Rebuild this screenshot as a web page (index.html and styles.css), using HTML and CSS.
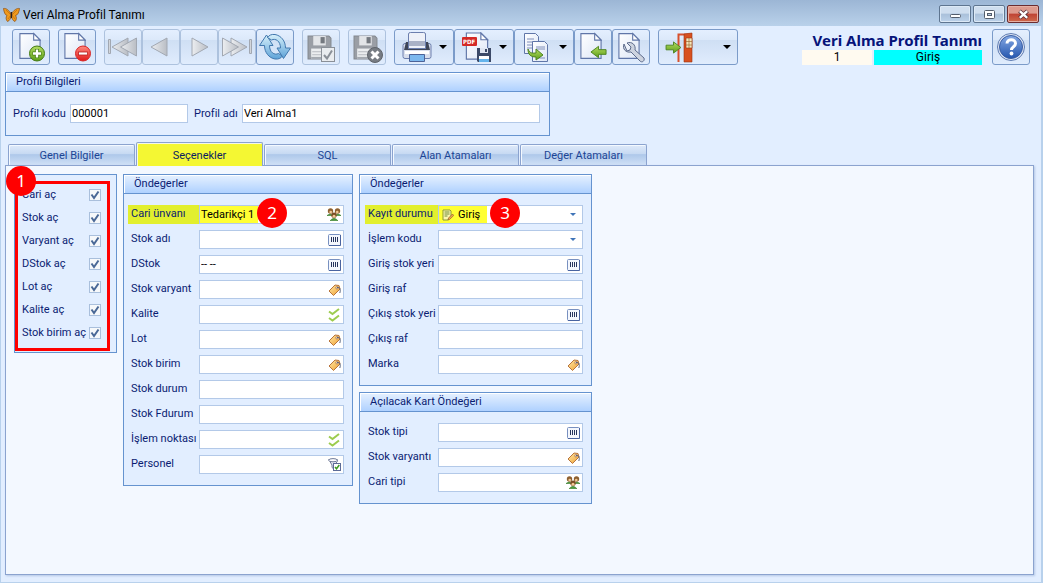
FILE: index.html
```
<!DOCTYPE html>
<html lang="tr">
<head>
<meta charset="utf-8">
<title>Veri Alma Profil Tanımı</title>
<link rel="stylesheet" href="styles.css">
</head>
<body>
<svg class="defs" aria-hidden="true">
  <defs>
    <linearGradient id="gPaper" x1="0" y1="0" x2="1" y2="1"><stop offset="0" stop-color="#fff"/><stop offset="1" stop-color="#dde6f6"/></linearGradient>
    <linearGradient id="gGreen" x1="0" y1="0" x2="0" y2="1"><stop offset="0" stop-color="#b4dc62"/><stop offset="1" stop-color="#5c9e18"/></linearGradient>
    <linearGradient id="gRed" x1="0" y1="0" x2="0" y2="1"><stop offset="0" stop-color="#ff8a80"/><stop offset="1" stop-color="#e01818"/></linearGradient>
    <linearGradient id="gGray" x1="0" y1="0" x2="1" y2="0"><stop offset="0" stop-color="#eceef1"/><stop offset="1" stop-color="#b9bdc4"/></linearGradient>
    <linearGradient id="gBlue" x1="0" y1="0" x2="0" y2="1"><stop offset="0" stop-color="#d6f0fa"/><stop offset="1" stop-color="#5fa3d8"/></linearGradient>
    <linearGradient id="gHelp" x1="0" y1="0" x2="0" y2="1"><stop offset="0" stop-color="#86a9e4"/><stop offset="1" stop-color="#2556ae"/></linearGradient>
    <linearGradient id="gTag" x1="0" y1="0" x2="1" y2="1"><stop offset="0" stop-color="#ffe9a8"/><stop offset="1" stop-color="#f0a030"/></linearGradient>
    <symbol id="page" viewBox="0 0 24 30"><path d="M1 1h15l7 7v20H1z" fill="url(#gPaper)" stroke="#6076a8" stroke-width="1.2"/><path d="M16 1v7h7z" fill="#fff" stroke="#6076a8" stroke-width="1.2"/></symbol>
    <symbol id="arrowL" viewBox="0 0 18 14"><path d="M1 7l8-6v3.500h8v5H9V13z" fill="url(#gGreen)" stroke="#4c8420" stroke-width="1"/></symbol>
    <symbol id="disk" viewBox="0 0 24 24"><path d="M1 1h20l2 2v20H1z" fill="#9a9ea5" stroke="#83888f"/><path d="M6 1h12v9H6z" fill="#e3e5e8"/><path d="M13 2h4v6h-4z" fill="#747980"/><path d="M4 13h16v10H4z" fill="#eceef0"/><path d="M5 16h14M5 19h14" stroke="#b7bbc0"/><path d="M4 21h16v2H4z" fill="#a4a9b0"/></symbol>
    <symbol id="barcode" viewBox="0 0 13 12"><rect x=".5" y=".5" width="12" height="11" rx="1" fill="#f4f7fd" stroke="#7890c0"/><path d="M12.500 1v10.500H1" fill="none" stroke="#4a64a0"/><path d="M3.500 3v5M5.500 3v5M7.500 3v5M9.500 3v5" stroke="#26345c"/></symbol>
    <symbol id="tag" viewBox="0 0 13 12"><path d="M1 7l6-6 4 .500L12 5l-6.500 6.500z" fill="url(#gTag)" stroke="#b8743c" stroke-linejoin="round"/><circle cx="9" cy="3.800" r="1.200" fill="#fff" stroke="#9a5c30" stroke-width=".7"/><path d="M9 3.500c3-.5 4 2 2.800 5.500" fill="none" stroke="#59637c"/></symbol>
    <symbol id="ticks" viewBox="0 0 13 14"><path d="M1 3.500l3.500 2.500L11 1M1 10l3.500 2.500L11 7.500" fill="none" stroke="#9ccc4e" stroke-width="2"/></symbol>
    <symbol id="people" viewBox="0 0 14 13"><path d="M0 7.500q3-3 6 0zM8 7.500q3-3 6 0z" fill="#4c9a3c" stroke="#357a2c" stroke-width=".6"/><circle cx="3.500" cy="3" r="2.700" fill="#8e6030"/><circle cx="10.500" cy="3" r="2.700" fill="#8e6030"/><circle cx="3.700" cy="4" r="1.300" fill="#f3c996"/><circle cx="10.300" cy="4" r="1.300" fill="#f3c996"/><path d="M3 12.800q4-5 8 0z" fill="#4c9a3c" stroke="#357a2c" stroke-width=".6"/><circle cx="7" cy="7.200" r="2.700" fill="#7a4d24"/><circle cx="7" cy="8.200" r="1.500" fill="#f3c996"/></symbol>
    <symbol id="person" viewBox="0 0 13 13"><path d="M.700 1.500h8.600v2L6.500 7v4.500L4 9.500V7z" fill="#e5e9f2" stroke="#6f7a98"/><ellipse cx="5" cy="2.200" rx="4.300" ry="1.600" fill="#fff" stroke="#6f7a98"/><rect x="5.500" y="5.500" width="7" height="7" fill="#fff" stroke="#5d6c98"/><path d="M7 9l1.500 1.700L11.300 7" fill="none" stroke="#3c9a20" stroke-width="1.500"/></symbol>
  </defs>
</svg>
<div class="window">
  <header class="titlebar">
    <svg class="logo" width="17" height="16" viewBox="0 0 17 16"><path d="M8 7C6 3 3 1 .500 1.500 1 5 2 8 4 8.500 2.500 10 3 13 4.500 14.500 6.500 14 8 11 8.200 9 8.500 11 10 14 12 14.500c1.500-1.500 2-4 .500-6C15 8 16 5 16.500 1.500 14 1 10.500 3 8.500 7z" fill="#f09a1c" stroke="#8a4a10" stroke-width=".7"/><path d="M3 3l5 5M14 3L9 8M5 12l3-4M12 12L9 8" stroke="#b5650c" stroke-width=".6"/><path d="M8.400 5v6" stroke="#2a2020" stroke-width="1.400"/></svg>
    <h1 class="caption">Veri Alma Profil Tanımı</h1>
    <button class="win-btn" aria-label="Küçült"><svg width="13" height="11" viewBox="0 0 13 11"><rect x="1.500" y="5.500" width="10" height="3" rx="1" fill="#fff" stroke="#535d6c"/></svg></button>
    <button class="win-btn" aria-label="Büyüt"><svg width="13" height="11" viewBox="0 0 13 11"><rect x="1.500" y="1.500" width="10" height="8" rx="1" fill="#fff" stroke="#535d6c"/><rect x="4.500" y="4.500" width="4" height="2" fill="#b8cbe0" stroke="#535d6c"/></svg></button>
    <button class="win-btn close" aria-label="Kapat"><svg width="13" height="11" viewBox="0 0 13 11"><path d="M2.500 2l8 7M10.500 2l-8 7" stroke="#5a3038" stroke-width="4"/><path d="M2.800 2.200l7.400 6.600M10.200 2.200L2.800 8.800" stroke="#fff" stroke-width="2.400"/></svg></button>
  </header>

  <main class="client">
    <div class="toolbar">
      <div class="tools">
        <div class="group"><button class="tool" aria-label="Yeni"><svg width="32" height="32"><use href="#page" x="4" y="1" width="22" height="29"/><circle cx="22" cy="22.500" r="7.500" fill="url(#gGreen)" stroke="#447a14"/><path d="M22 18v9M17.500 22.500h9" stroke="#447a14" stroke-width="4"/><path d="M22 18.500v8M18 22.500h8" stroke="#fff" stroke-width="2.400"/></svg></button></div>
        <div class="group"><button class="tool" aria-label="Sil"><svg width="32" height="32"><use href="#page" x="3" y="1" width="22" height="29"/><circle cx="22" cy="22.500" r="7.500" fill="url(#gRed)" stroke="#d82828"/><rect x="17.500" y="21" width="9" height="3" fill="#fff" stroke="#b82020" stroke-width=".8"/></svg></button></div>
        <div class="group">
          <button class="tool off" disabled aria-label="İlk"><svg width="32" height="32"><g fill="url(#gGray)" stroke="#a2a8b2"><path d="M1.500 8.500h2v14h-2z"/><path d="M21 7v18L5 16z"/><path d="M29.500 7v18l-16-9z"/></g></svg></button>
          <button class="tool off" disabled aria-label="Önceki"><svg width="32" height="32"><path d="M22 7v18L6 16z" fill="url(#gGray)" stroke="#a2a8b2"/></svg></button>
          <button class="tool off" disabled aria-label="Sonraki"><svg width="32" height="32"><path d="M9 7v18l16-9z" fill="url(#gGray)" stroke="#a2a8b2"/></svg></button>
          <button class="tool off" disabled aria-label="Son"><svg width="32" height="32"><g fill="url(#gGray)" stroke="#a2a8b2"><path d="M28.500 8.500h2v14h-2z"/><path d="M10 7v18l16-9z"/><path d="M1.500 7v18l16-9z"/></g></svg></button>
          <button class="tool" aria-label="Yenile"><svg width="32" height="32"><g fill="url(#gBlue)" stroke="#4278ae" stroke-linejoin="round"><path d="M5.500 14.500c0 7 4.500 12.500 10.500 13.500 4 .5 6-1 7.500-3l-4-2.500c-4 2-9-1-9-8h3.500L7.500 4 .500 14.500z"/><path d="M26.500 17c0-7-4.500-12.500-10.500-13.500-4-.5-6 1-7.500 3l4 2.500c4-2 9 1 9 8H18l6.500 10.500L31.500 17z"/></g></svg></button>
        </div>
        <div class="group"><button class="tool off" disabled aria-label="Kaydet"><svg width="32" height="32"><use href="#disk" x="2" y="3" width="25" height="27"/><rect x="16.500" y="16.500" width="13" height="14" fill="#e9ecef" stroke="#8a9098"/><path d="M19 24l3 3.500 5-8" fill="none" stroke="#8a9098" stroke-width="2"/></svg></button></div>
        <div class="group"><button class="tool off" disabled aria-label="Kaydı iptal et"><svg width="32" height="32"><use href="#disk" x="2" y="3" width="25" height="27"/><circle cx="24" cy="24" r="7.500" fill="#777c83" stroke="#5f646b"/><path d="M20.500 20.500l7 7M27.500 20.500l-7 7" stroke="#fff" stroke-width="3"/></svg></button></div>
        <div class="group">
          <button class="tool drop" aria-label="Yazdır"><svg width="32" height="32"><rect x="2" y="12.500" width="28" height="15" rx="2" fill="#d8deec" stroke="#6c7fae"/><path d="M5 11h22l2 8H3z" fill="#3e4556"/><path d="M7.500 17.500V3q0-1.500 2-1.500h13q2 0 2 1.500v14.500z" fill="#eef1f8" stroke="#6c7fae"/><path d="M8 10h16v5H8z" fill="#aab2c6"/><path d="M4 20h24v3H4z" fill="#fff"/><path d="M8.500 23.500h15v7h-15z" fill="#7cb8ee" stroke="#4d6398"/></svg></button>
          <button class="tool drop" aria-label="PDF kaydet"><svg width="32" height="32"><use href="#page" x="4" y="1" width="24" height="29"/><rect x="1" y="6" width="15" height="9" rx="1" fill="#d42a26"/><text x="2" y="13" class="pdf">PDF</text><path d="M16 17h14v14H17l-1-1z" fill="#3c4a68"/><path d="M19 17h8v5h-8z" fill="#dfe6f2"/><path d="M24 18h2v3h-2z" fill="#3c4a68"/><path d="M18 25h10v6H18z" fill="#fff"/><path d="M18 28h10v3H18z" fill="#64b4ec"/></svg></button>
          <button class="tool drop" aria-label="Kopyala"><svg width="32" height="32"><path d="M3.500 2.500h11l3 3v17h-14z" fill="url(#gPaper)" stroke="#6076a8"/><path d="M6 8h7M6 11h7M6 14h6M6 17h6" stroke="#8090ba"/><path d="M11.500 10.500h12l3 3v17h-15z" fill="url(#gPaper)" stroke="#6076a8"/><path d="M15 16h9M15 18h9M15 27h9" stroke="#8090ba"/><path d="M7 18c2 5 5 4 8 4v-4l7 6-7 5v-3c-5 0-8-2-8-8z" fill="url(#gGreen)" stroke="#4c8420"/></svg></button>
          <button class="tool" aria-label="İçe al"><svg width="32" height="32"><use href="#page" x="3" y="1" width="22" height="29"/><use href="#arrowL" x="13" y="14" width="17" height="14"/></svg></button>
          <button class="tool" aria-label="Ayarlar"><svg width="32" height="32"><use href="#page" x="3" y="1" width="22" height="29"/><path d="M9 13c-2 5 2 9 7 8l9 9c2 2 5 0 4-3l-9-8c1-5-3-9-8-7l4 4-1 3-3 1z" fill="#cdd3df" stroke="#5e6c8c" stroke-linejoin="round"/></svg></button>
        </div>
        <div class="group"><button class="tool exit" aria-label="Çıkış"><svg width="34" height="32"><path d="M15.500 31V3.500H29" fill="none" stroke="#d8502c" stroke-width="2"/><path d="M21 3l8-1v29h-8z" fill="#d8501f" stroke="#9c3210" stroke-width=".6"/><path d="M23 7h6v10h-6z" fill="#f3e6bc" stroke="#9c3210" stroke-width=".6"/><path d="M26 7v10M23 10.500h6M23 14h6" stroke="#9c6a30" stroke-width=".7"/><use href="#arrowL" x="-19" y="10" width="17" height="13" transform="scale(-1 1)"/></svg></button></div>
      </div>
      <div class="status">
        <h2 class="heading">Veri Alma Profil Tanımı</h2>
        <div class="badges"><span class="count">1</span><span class="mode">Giriş</span></div>
      </div>
      <button class="tool" aria-label="Yardım"><svg width="32" height="32"><circle cx="16" cy="16" r="13.500" fill="#dfe6f4" stroke="#5f7cb2"/><circle cx="16" cy="16" r="11.500" fill="url(#gHelp)" stroke="#3a5ea4"/><path d="M12 12.500c0-5 8.500-5 8.500 0 0 3.500-4 3-4 6.500" fill="none" stroke="#fff" stroke-width="3"/><circle cx="16.500" cy="22.500" r="1.900" fill="#fff"/></svg></button>
    </div>

    <section class="box profile">
      <h3 class="box-head">Profil Bilgileri</h3>
      <div class="profile-row">
        <label class="code-label" for="kod">Profil kodu</label><input class="field code" id="kod" value="000001">
        <label class="name-label" for="ad">Profil adı</label><input class="field name" id="ad" value="Veri Alma1">
      </div>
    </section>

    <nav class="tabs" role="tablist">
      <button class="tab" role="tab">Genel Bilgiler</button>
      <button class="tab active" role="tab" aria-selected="true">Seçenekler</button>
      <button class="tab" role="tab">SQL</button>
      <button class="tab" role="tab">Alan Atamaları</button>
      <button class="tab" role="tab">Değer Atamaları</button>
    </nav>

    <section class="panel">
      <div class="box checks">
        <label class="check">Cari aç<input type="checkbox" checked></label>
        <label class="check">Stok aç<input type="checkbox" checked></label>
        <label class="check">Varyant aç<input type="checkbox" checked></label>
        <label class="check">DStok aç<input type="checkbox" checked></label>
        <label class="check">Lot aç<input type="checkbox" checked></label>
        <label class="check">Kalite aç<input type="checkbox" checked></label>
        <label class="check">Stok birim aç<input type="checkbox" checked></label>
        <div class="frame"></div>
        <span class="mark mark-corner">1</span>
      </div>

      <div class="box middle">
        <h3 class="box-head">Öndeğerler</h3>
        <div class="rows">
          <div class="row hot"><label for="m1">Cari ünvanı</label><div class="field"><input id="m1" value="Tedarikçi 1"><svg width="14" height="13"><use href="#people"/></svg></div><span class="mark mark-mid">2</span></div>
          <div class="row"><label for="m2">Stok adı</label><div class="field"><input id="m2"><svg width="13" height="12"><use href="#barcode"/></svg></div></div>
          <div class="row"><label for="m3">DStok</label><div class="field"><input id="m3" value="-- --"><svg width="13" height="12"><use href="#barcode"/></svg></div></div>
          <div class="row"><label for="m4">Stok varyant</label><div class="field"><input id="m4"><svg width="13" height="12"><use href="#tag"/></svg></div></div>
          <div class="row"><label for="m5">Kalite</label><div class="field"><input id="m5"><svg width="13" height="14"><use href="#ticks"/></svg></div></div>
          <div class="row"><label for="m6">Lot</label><div class="field"><input id="m6"><svg width="13" height="12"><use href="#tag"/></svg></div></div>
          <div class="row"><label for="m7">Stok birim</label><div class="field"><input id="m7"><svg width="13" height="12"><use href="#tag"/></svg></div></div>
          <div class="row"><label for="m8">Stok durum</label><div class="field"><input id="m8"></div></div>
          <div class="row"><label for="m9">Stok Fdurum</label><div class="field"><input id="m9"></div></div>
          <div class="row"><label for="m10">İşlem noktası</label><div class="field"><input id="m10"><svg width="13" height="14"><use href="#ticks"/></svg></div></div>
          <div class="row"><label for="m11">Personel</label><div class="field"><input id="m11"><svg width="13" height="13"><use href="#person"/></svg></div></div>
        </div>
      </div>

      <div class="column">
        <div class="box">
          <h3 class="box-head">Öndeğerler</h3>
          <div class="rows">
            <div class="row hot"><label for="r1">Kayıt durumu</label><div class="field"><svg class="lead" width="12" height="12" viewBox="0 0 12 12"><path d="M1 1h7l1 1v5l-3 4H1z" fill="#fdf6b0" stroke="#8a9a34"/><path d="M2.500 3h5M2.500 5h5M2.500 7h3" stroke="#6a8a3c"/><path d="M6 11l.500-2L10.500 5l1.200 1.500L7.500 10.500z" fill="#f0a850" stroke="#94602c" stroke-width=".7"/></svg><select id="r1"><option>Giriş</option></select></div><span class="mark mark-mid">3</span></div>
            <div class="row"><label for="r2">İşlem kodu</label><div class="field"><select id="r2"><option></option></select></div></div>
            <div class="row"><label for="r3">Giriş stok yeri</label><div class="field"><input id="r3"><svg width="13" height="12"><use href="#barcode"/></svg></div></div>
            <div class="row"><label for="r4">Giriş raf</label><div class="field"><input id="r4"></div></div>
            <div class="row"><label for="r5">Çıkış stok yeri</label><div class="field"><input id="r5"><svg width="13" height="12"><use href="#barcode"/></svg></div></div>
            <div class="row"><label for="r6">Çıkış raf</label><div class="field"><input id="r6"></div></div>
            <div class="row"><label for="r7">Marka</label><div class="field"><input id="r7"><svg width="13" height="12"><use href="#tag"/></svg></div></div>
          </div>
        </div>
        <div class="box">
          <h3 class="box-head">Açılacak Kart Öndeğeri</h3>
          <div class="rows">
            <div class="row"><label for="k1">Stok tipi</label><div class="field"><input id="k1"><svg width="13" height="12"><use href="#barcode"/></svg></div></div>
            <div class="row"><label for="k2">Stok varyantı</label><div class="field"><input id="k2"><svg width="13" height="12"><use href="#tag"/></svg></div></div>
            <div class="row"><label for="k3">Cari tipi</label><div class="field"><input id="k3"><svg width="14" height="13"><use href="#people"/></svg></div></div>
          </div>
        </div>
      </div>
    </section>
  </main>
</div>
</body>
</html>
```
FILE: styles.css
```
* { box-sizing: border-box; }
body { margin: 0; font: 11px/14px Roboto, "Noto Sans", sans-serif; color: #0a1c72; }
h1, h2, h3 { margin: 0; font-size: inherit; font-weight: normal; }
button, input, select { font: inherit; color: inherit; margin: 0; }
button { padding: 0; }
.defs { position: absolute; width: 0; height: 0; }

.window { min-height: 100vh; display: flex; flex-direction: column; background: #e2eeff; }
.titlebar { display: flex; align-items: center; gap: 2px; height: 26px; padding: 0 4px 0 3px; background: linear-gradient(#9cb6d5, #b9d1ea); }
.logo { margin-top: 3px; }
.caption { flex: 1; margin-top: 3px; padding-left: 1px; color: #000; font: 12px/16px Roboto, "Noto Sans", sans-serif; }
.win-btn { width: 32px; height: 18px; margin-top: 2px; display: flex; align-items: center; justify-content: center; border: 1px solid #5e7590; border-radius: 2px; background: linear-gradient(#cfdeef 0 45%, #a9c0da 50%, #bcd2ea); box-shadow: inset 0 0 0 1px #dce9f6; }
.win-btn.close { border-color: #6b2c30; background: linear-gradient(#dd9a8e 0 45%, #bf4334 50%, #cf6a4c); box-shadow: inset 0 0 0 1px #e6b0a4; }

.client { flex: 1; display: flex; flex-direction: column; padding: 3px 7px 7px 4px; border: solid #b8d1ec; border-width: 0 2px 1px 1px; }
.toolbar { display: flex; align-items: flex-start; gap: 10px; padding: 0 4px 0 7px; }
.tools { flex: 1; display: flex; gap: 8px; }
.group { display: flex; }
.tool { width: 38px; height: 36px; display: flex; align-items: center; padding: 0 2px; border: 1px solid #7b9bc9; border-radius: 3px; background: linear-gradient(#e4efff, #dce9fa 28%, #cfdff4 30%, #e0ecfd); }
.tool.drop { width: 60px; padding-left: 6px; }
.tool.exit { width: 80px; padding-left: 4px; }
.tool.drop::after, .tool.exit::after { content: ""; margin-left: auto; margin-right: 4px; border: 4px solid transparent; border-top-color: #000; border-bottom: 0; }
.tool.off { border-color: #adc2de; }
.pdf { font: bold 6px/6px "DejaVu Sans Condensed", sans-serif; fill: #fff; }
.status { width: 180px; }
.heading { height: 21px; text-align: right; color: #06147a; font: bold 15px/22px "Noto Sans", sans-serif; white-space: nowrap; }
.badges { display: flex; gap: 2px; color: #000; text-align: center; font-size: 12px; line-height: 15px; }
.count { width: 70px; background: #fffaf0; }
.mode { flex: 1; background: #0ff; }

.box { position: relative; border: 1px solid #6593cf; background: #e2eeff; }
.box-head { height: 19px; padding-left: 10px; border: solid #6593cf; border-width: 0 0 1px; line-height: 18px; background: linear-gradient(#e6f1ff, #afd1ff); box-shadow: inset 1px 1px #fff; }
.profile { width: 545px; margin-top: 7px; }
.profile-row { display: flex; align-items: center; padding: 12px 9px 12px 7px; }
.profile-row label { flex: none; line-height: 19px; }
.code-label { width: 57px; }
.name-label { width: 48px; }
.field { height: 19px; border: 1px solid #b3c9e8; background: #fff; color: #000; padding: 0 1px; }
.code { width: 118px; margin-right: 6px; }
.name { flex: 1; min-width: 0; }

.tabs { display: flex; align-items: flex-end; gap: 1px; height: 24px; margin-top: 5px; padding-left: 3px; }
.tab { width: 127px; height: 21px; padding-top: 2px; border: 1px solid #8ba3cf; border-bottom: 0; border-radius: 2px 2px 0 0; color: #1c4595; background: linear-gradient(#dfeafa, #c6d9f2 45%, #aec8ea 48%, #cfe0f6); box-shadow: inset 1px 1px #f4f9ff; }
.tab.active { z-index: 1; height: 24px; margin-bottom: -1px; color: #0a1c60; background: #f4f733; box-shadow: inset 1px 1px #f4f7e8; }

.panel { flex: 1; display: flex; align-items: flex-start; gap: 6px; padding: 8px; border: 1px solid #8ba3cf; background: #f3f8ff; box-shadow: 1px 1px 2px #b4c8e6; }
.checks { width: 103px; padding: 8px 15px 8px 7px; }
.check { display: flex; justify-content: space-between; align-items: center; height: 23px; white-space: nowrap; }
.check input { flex: none; appearance: none; width: 12px; height: 12px; border: 1px solid #a9bfdc; background: #f6f8fa url("data:image/svg+xml,%3Csvg xmlns='http://www.w3.org/2000/svg' viewBox='0 0 10 10'%3E%3Cpath d='M1.500 4.500l2.500 3.500L8.500 1.500' fill='none' stroke='%234a6896' stroke-width='2'/%3E%3C/svg%3E"); }
.frame { position: absolute; inset: 6px 6px 1px 0; border: 3px solid #f00; }
.middle { width: 230px; }
.column { width: 233px; display: flex; flex-direction: column; gap: 6px; }
.rows { display: flex; flex-direction: column; gap: 6px; padding: 11px 8px; }
.middle .rows { padding-left: 4px; }
.column .rows { padding-left: 5px; }
.row { position: relative; display: flex; }
.row label { width: 71px; padding-left: 3px; line-height: 18px; white-space: nowrap; }
.column .row label { width: 73px; }
.row .field { flex: 1; min-width: 0; display: flex; align-items: center; padding-right: 2px; }
.field input, .field select { flex: 1; min-width: 0; height: 17px; padding: 0; border: 0; background: none; outline: 0; }
.field select { appearance: none; padding-left: 4px; background: url("data:image/svg+xml,%3Csvg xmlns='http://www.w3.org/2000/svg' width='6' height='3'%3E%3Cpath d='M0 0h6L3 3z' fill='%233f74b8'/%3E%3C/svg%3E") right 4px center no-repeat; }
.lead { margin-left: 2px; }
.hot label { background: #e2ef2e; }
.hot .field { background: linear-gradient(90deg, #ff3 58px, #fff 58px); }
.column .hot .field { background: linear-gradient(90deg, #ff3 48px, #fff 48px); }
.mark { position: absolute; width: 30px; height: 30px; border-radius: 50%; background: #f00; color: #fff; text-align: center; font: 17px/30px "Noto Sans", sans-serif; }
.mark-corner { left: -9px; top: -9px; }
.mark-mid { left: 129px; top: -7px; }
.column .mark-mid { left: 125px; }
```
